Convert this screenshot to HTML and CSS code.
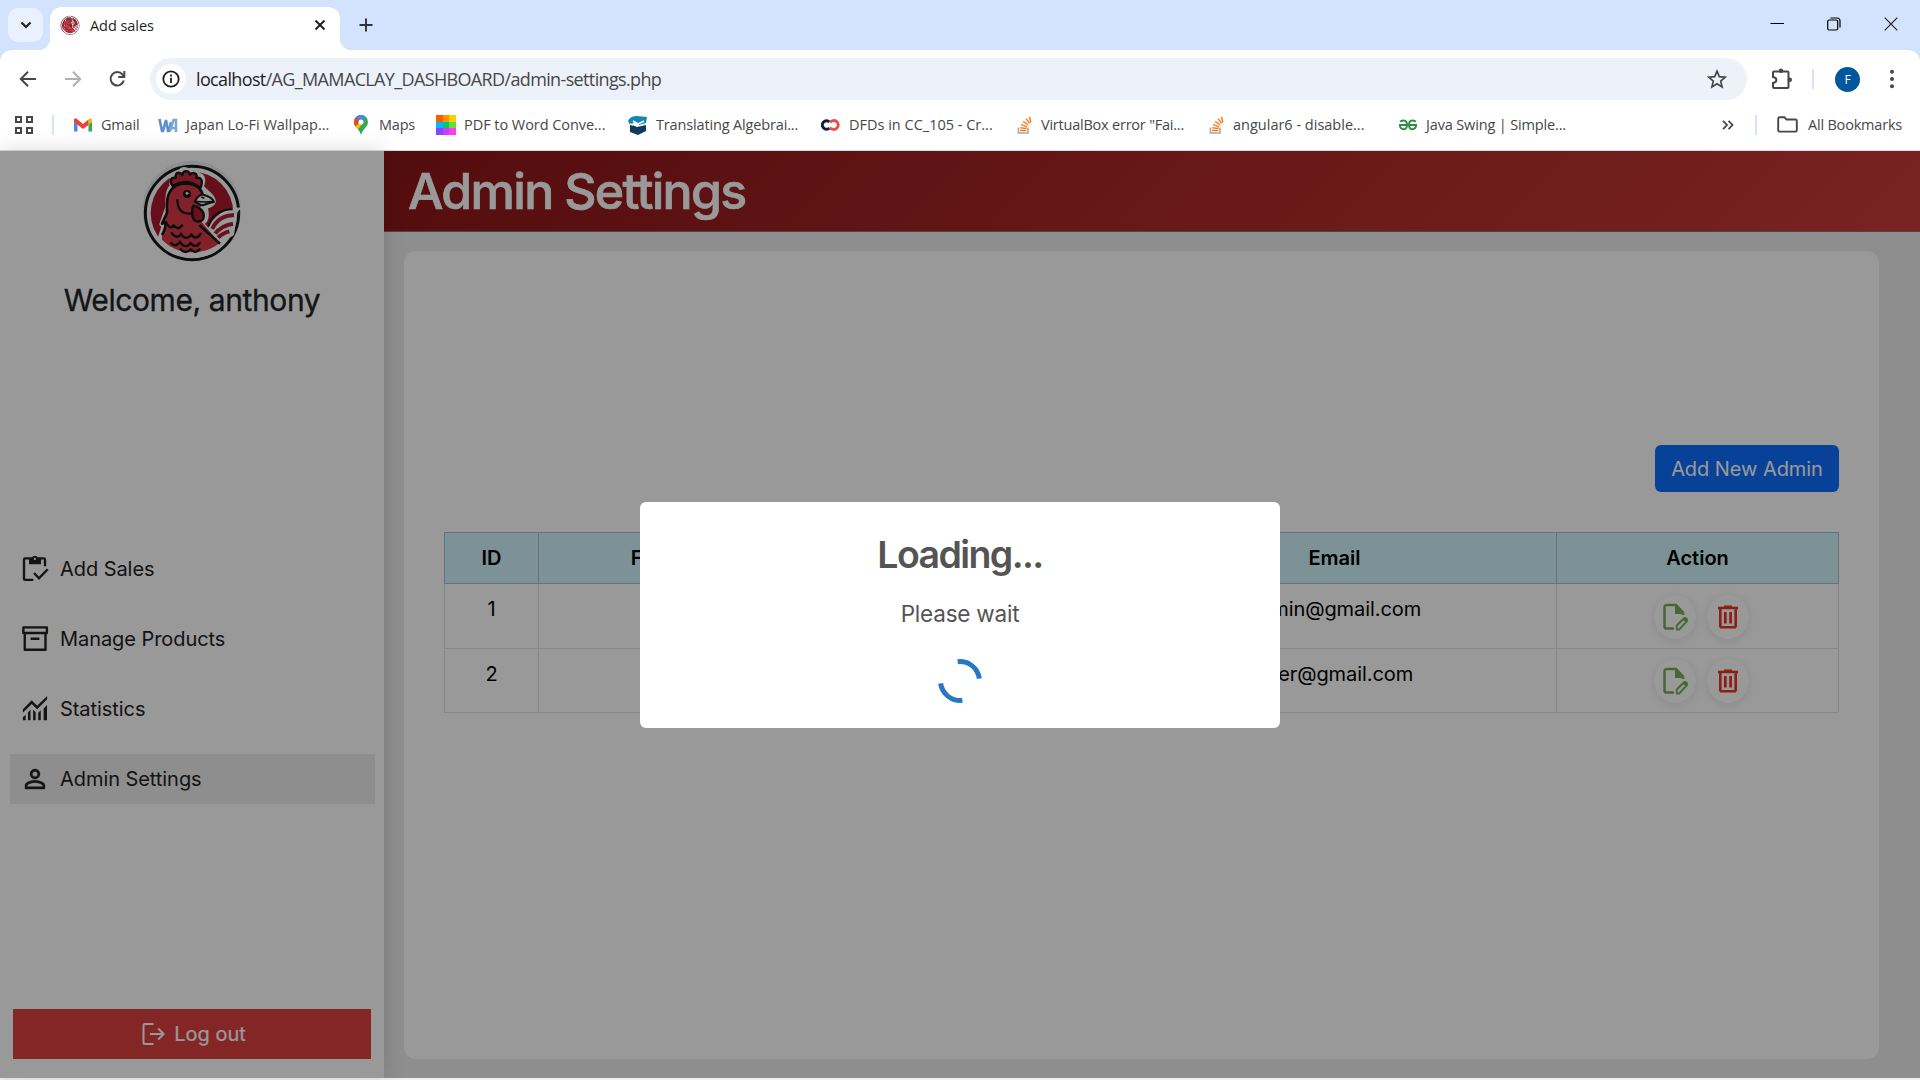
FILE: index.html
```html
<!DOCTYPE html>
<html lang="en">
<head>
<meta charset="utf-8">
<title>Add sales</title>
<link rel="stylesheet" href="styles.css">
</head>
<body>
<svg class="defs" width="0" height="0">
  <symbol id="rooster" viewBox="36 15 300 306">
    <circle cx="185" cy="165" r="148" fill="#eceeee"/>
    <circle cx="186" cy="174" r="140" fill="#fff" stroke="#151718" stroke-width="9"/>
    <circle cx="186" cy="174" r="124" fill="#ab1a2c"/>
    <path d="M336 157C285 158 248 185 234 222L272 266 312 240 322 172Z" fill="#fff"/>
    <path d="M308 163c-38 0-64 20-72 50" fill="none" stroke="#151718" stroke-width="6"/>
    <path d="M312 180c-36 2-56 20-65 42M309 206c-26 4-42 14-53 30M298 229c-14 4-26 10-34 19" fill="none" stroke="#a92034" stroke-width="12"/>
    <path d="M118 92c-2-22 8-44 26-44 6-16 28-14 34-6 16-8 28 2 32 12 16 4 20 22 12 40 14 14 34 26 36 46-6 16-18 18-24 20 6 24 0 42-10 46l56 58c-20 36-64 44-90 45-40 0-80-20-108-58l12-36c-4-2-6-4-6-8l18-52c0-30 0-50 12-63Z" fill="#fff"/>
    <path d="M96 238c6-8 8-18 12-36l-11 3 13-30 1-33c0-30 14-54 50-60 30-3 53 10 57 40l-12 68 62 74c-18 16-46 28-82 28-34 0-64-12-90-38Z" fill="#db3846"/>
    <path d="M96 240c6-8 10-22 12-38l-12 4 15-32v-30c1-34 20-58 52-59 32 0 52 14 55 36M208 210l62 56" fill="none" stroke="#151718" stroke-width="8" stroke-linejoin="round"/>
    <path d="M128 93c-12-16-4-28 9-24-2-18 12-20 20-9 2-16 20-15 23-1 10-11 24-2 19 10 14-4 22 8 12 30-30-24-54-23-83-6Z" fill="#c9293b" stroke="#151718" stroke-width="7" stroke-linejoin="round"/>
    <path d="M190 152c20 4 34 18 31 34-1 16-28 20-33 0-2-14-4-22 2-34Z" fill="#b51d30" stroke="#151718" stroke-width="7"/>
    <path d="M194 139c8-12 16-22 26-20 16 4 28 10 32 22-16 2-26 8-34 10-8-1-16-6-24-12Z" fill="#fff" stroke="#151718" stroke-width="6" stroke-linejoin="round"/>
    <path d="M196 139l24 2 30-1M214 126l9 4" fill="none" stroke="#151718" stroke-width="5"/>
    <circle cx="171" cy="117" r="12" fill="#151718"/><circle cx="171" cy="115" r="4.500" fill="#dde8ea"/>
    <path d="M142 133c0 34 18 46 42 42" fill="none" stroke="#151718" stroke-width="7"/>
    <path d="M110 205c8 14 14 16 20 6 8 10 18 14 28-2M124 232c8 16 22 18 29 4 8 16 24 16 31 2 8 14 22 12 29-4M122 262c8 12 20 12 28-2 8 16 22 18 32 4 8 12 22 12 28-2M150 280c8 12 20 16 32 3 10 12 22 8 28-2" fill="none" stroke="#151718" stroke-width="7" stroke-linejoin="round"/>
  </symbol>
  <symbol id="so" viewBox="0 0 20 22">
    <path d="M3 14v7h12v-7" fill="none" stroke="#a5a9ac" stroke-width="2"/>
    <path d="M5 18h8M5.300 14.500l8 1M6.300 10.500l7.600 2.600M9 6.500l6.300 4.500M12.500 3l4.500 6M17 1l1.500 7" fill="none" stroke="#f48024" stroke-width="1.900"/>
  </symbol>
  <symbol id="edit" viewBox="0 0 26 28">
    <path d="M12 25.500H4.500a2 2 0 0 1-2-2V4a2 2 0 0 1 2-2H14l7 7.500V12" fill="none" stroke="#7aad52" stroke-width="2.500"/>
    <path d="M13 2l8.500 9H13Z" fill="#7aad52"/>
    <path d="M14.800 26.500v-4l7-7a1.500 1.500 0 0 1 2.200 0l.7.700a1.500 1.500 0 0 1 0 2.200l-7.500 8.100Z" fill="none" stroke="#7aad52" stroke-width="1.900"/>
    <path d="M20.500 16l2-1.700 3 3-2 2Z" fill="#7aad52"/>
  </symbol>
  <symbol id="trash" viewBox="0 0 20 24">
    <path d="M0 1.800h6V.500h8v1.300h6v2.400H0Z" fill="#ea3323"/>
    <path d="M2.300 4v16.800a1.500 1.500 0 0 0 1.500 1.500h12.400a1.500 1.500 0 0 0 1.500-1.500V4" fill="none" stroke="#ea3323" stroke-width="2.600"/>
    <path d="M7.300 7v11.500M12.600 7v11.500" stroke="#ea3323" stroke-width="2.700"/>
  </symbol>
</svg>

<header class="browser">
  <div class="tabstrip">
    <div class="tab-search"><svg width="12" height="8" viewBox="0 0 12 8"><path d="M1.500 1.500L6 6l4.500-4.500" fill="none" stroke="#1f1f1f" stroke-width="2.200"/></svg></div>
    <div class="tab">
      <svg class="favicon" width="20" height="20"><use href="#rooster"/></svg>
      <span class="tab-title">Add sales</span>
      <svg width="12" height="12" viewBox="0 0 12 12"><path d="M1.500 1.500l9 9M10.500 1.500l-9 9" stroke="#1f1f1f" stroke-width="1.900"/></svg>
    </div>
    <svg class="new-tab" width="14" height="14" viewBox="0 0 14 14"><path d="M7 .5v13M.5 7h13" stroke="#333" stroke-width="1.900"/></svg>
    <div class="window-controls">
      <svg width="14" height="14" viewBox="0 0 14 14"><path d="M.5 6.500h13.500" stroke="#000" stroke-width="1"/></svg>
      <svg width="14" height="14" viewBox="0 0 14 14"><rect x=".7" y="3" width="10" height="10" rx="1.500" fill="none" stroke="#000" stroke-width="1.200"/><path d="M3.500 1h6.500a3 3 0 0 1 3 3v6.500" fill="none" stroke="#000" stroke-width="1.200"/></svg>
      <svg width="14" height="14" viewBox="0 0 14 14"><path d="M.7.700l12.600 12.600M13.300.700L.7 13.300" stroke="#222" stroke-width="1.200"/></svg>
    </div>
  </div>
  <div class="toolbar">
    <div class="nav-buttons">
      <svg width="18" height="18" viewBox="0 0 18 18"><path d="M17 9H2.500M9 1.800L1.800 9 9 16.200" fill="none" stroke="#474747" stroke-width="2"/></svg>
      <svg width="18" height="18" viewBox="0 0 18 18"><path d="M1 9h14.500M9 1.800L16.200 9 9 16.200" fill="none" stroke="#b0b0b0" stroke-width="2"/></svg>
      <svg width="18" height="18" viewBox="0 0 18 18"><path d="M14.800 10.500a6.700 6.700 0 1 1-1.300-6L15 6" fill="none" stroke="#474747" stroke-width="2"/><path d="M15.300 1v6H9.300" fill="none" stroke="#474747" stroke-width="2"/></svg>
    </div>
    <div class="omnibox">
      <span class="site-info"><svg width="18" height="18" viewBox="0 0 18 18"><circle cx="9" cy="9" r="7.700" fill="none" stroke="#1f1f1f" stroke-width="1.800"/><path d="M9 7.800v5.200M9 4.600v2" stroke="#1f1f1f" stroke-width="1.800"/></svg></span>
      <span class="url"><b>localhost</b>/AG_MAMACLAY_DASHBOARD/admin-settings.php</span>
      <svg width="20" height="20" viewBox="0 0 20 20"><path d="M10 2.200l2.300 5.500 6 .5-4.600 3.900 1.400 5.800L10 14.800l-5.100 3.100 1.400-5.800L1.700 8.200l6-.5Z" fill="none" stroke="#474747" stroke-width="1.700"/></svg>
    </div>
    <svg class="puzzle" width="22" height="22" viewBox="0 0 22 22"><path d="M3 3.500H16.500a1 1 0 0 1 1 1V19a1 1 0 0 1-1 1H3a1 1 0 0 1-1-1V15c4.500-.5 4.500-5.500 0-6V4.500a1 1 0 0 1 1-1Z" fill="none" stroke="#474747" stroke-width="2"/><circle cx="10" cy="2.700" r="2.200" fill="#474747"/><circle cx="18.800" cy="11.800" r="2.200" fill="#474747"/></svg>
    <i class="divider"></i>
    <span class="avatar">F</span>
    <svg class="dots" width="6" height="20" viewBox="0 0 6 20"><g fill="#474747"><circle cx="3" cy="2.800" r="2"/><circle cx="3" cy="10" r="2"/><circle cx="3" cy="17.200" r="2"/></g></svg>
  </div>
  <nav class="bookmarks">
    <svg class="apps" width="18" height="18" viewBox="0 0 18 18"><g fill="none" stroke="#474747" stroke-width="2"><path d="M1 1h5v5H1ZM12 1h5v5h-5ZM1 12h5v5H1ZM12 12h5v5h-5Z"/></g></svg>
    <i class="divider"></i>
    <span class="bm gmail"><svg width="20" height="20" viewBox="0 0 20 20"><path d="M1 4v12.500h3.500V8Z" fill="#4285f4"/><path d="M19 4v12.500h-3.500V8Z" fill="#34a853"/><path d="M15.500 4.500l2-1.200Q19 3 19 5v2l-3.500 3Z" fill="#fbbc04"/><path d="M1 5Q1 3 3 3.300L10 9l5.500-4.500V10L10 14 1 7Z" fill="#ea4335"/></svg>Gmail</span>
    <span class="bm japan"><svg width="20" height="20" viewBox="0 0 20 20"><path d="M1.500 4l2.500 12h1L8 5l2 11h1l2-9" fill="none" stroke="#5d8fcd" stroke-width="2.600"/><path d="M12 16.500l3.500-11.500h2.500v12M14 13h4" fill="none" stroke="#7ba6dc" stroke-width="2.500"/></svg>Japan Lo-Fi Wallpap...</span>
    <span class="bm maps"><svg width="16" height="20" viewBox="0 0 16 20"><path d="M1 7a7 7 0 0 1 14 0c0 5-5 6-7 13C6 13 1 12 1 7Z" fill="#34a853"/><path d="M1 7a7 7 0 0 1 7-7L5 8l-2.500 3.500Q1 10 1 7Z" fill="#ea4335"/><path d="M3 2.500A7 7 0 0 1 12.500 1.600L8 7Z" fill="#4285f4"/><path d="M2.500 11.500L8 6l2 2-5 6.500Z" fill="#fbbc04"/><circle cx="8" cy="7" r="2.500" fill="#fff"/></svg>Maps</span>
    <span class="bm pdf"><svg width="20" height="20" viewBox="0 0 20 20"><path d="M0 0h7v7H0Z" fill="#ff5a00"/><path d="M7 0h6v7H7Z" fill="#ff9500"/><path d="M13 0h7v7h-7Z" fill="#ffd000"/><path d="M0 7h7v6H0Z" fill="#00b8ff"/><path d="M7 7h6v6H7Z" fill="#00c878"/><path d="M13 7h7v6h-7Z" fill="#5fe03e"/><path d="M0 13h7v7H0Z" fill="#8a43ff"/><path d="M7 13h6v7H7Z" fill="#c93dff"/><path d="M13 13h7v7h-7Z" fill="#ff3df0"/></svg>PDF to Word Conve...</span>
    <span class="bm algebra"><svg width="20" height="20" viewBox="0 0 20 20"><path d="M0 6Q2 1 9 1l10 1-1 6-7 2-4-3-5 3Z" fill="#1586b4"/><path d="M2 9l7 3 9-2v6l-8 4-8-3Z" fill="#12395f"/><path d="M5 6l5 3 6-3M2 9l3 1" fill="none" stroke="#fff" stroke-width="1.600"/></svg>Translating Algebrai...</span>
    <span class="bm dfd"><svg width="20" height="14" viewBox="0 0 20 14"><path d="M9.500 4A4.200 4.200 0 1 0 9.500 10" fill="none" stroke="#101c3a" stroke-width="3"/><path d="M10 9.500A4.500 4.500 0 1 0 10 4.500" fill="none" stroke="#ef4b4b" stroke-width="2.800"/></svg>DFDs in CC_105 - Cr...</span>
    <span class="bm vbox"><svg width="16" height="18"><use href="#so"/></svg>VirtualBox error "Fai...</span>
    <span class="bm angular"><svg width="16" height="18"><use href="#so"/></svg>angular6 - disable...</span>
    <span class="bm java"><svg width="18" height="12" viewBox="0 0 18 12"><path d="M0 6h18M1 2.500Q8-.5 8 6c0 5.500-7 5.500-7 .5M17 2.500Q10-.5 10 6c0 5.500 7 5.500 7 .5" fill="none" stroke="#2f8d46" stroke-width="1.900"/></svg>Java Swing | Simple...</span>
    <svg class="more" width="12" height="10" viewBox="0 0 12 10"><path d="M1 .8L5 5 1 9.200M6.500.800L10.500 5l-4 4.200" fill="none" stroke="#474747" stroke-width="1.800"/></svg>
    <i class="divider"></i>
    <span class="bm all"><svg width="21" height="17" viewBox="0 0 21 17"><path d="M2.500 1.200h5l2 2.300h9a1.300 1.300 0 0 1 1.300 1.300v9.500a1.300 1.300 0 0 1-1.300 1.300h-16a1.300 1.300 0 0 1-1.300-1.300V2.500a1.300 1.300 0 0 1 1.300-1.300Z" fill="none" stroke="#474747" stroke-width="1.900"/></svg>All Bookmarks</span>
  </nav>
</header>

<div class="page">
  <aside class="sidebar">
    <svg class="logo" width="100" height="102"><use href="#rooster"/></svg>
    <h3 class="welcome">Welcome, anthony</h3>
    <ul class="menu">
      <li><svg width="30" height="30" viewBox="0 0 24 24"><path d="M10.700 20.700H4.200a1 1 0 0 1-1-1V4.500a1 1 0 0 1 1-1H19a1 1 0 0 1 1 1v5.300" fill="none" stroke="#222" stroke-width="1.900"/><path d="M7.200 3.200h2.300a2.500 2.500 0 0 1 4.800 0h2.500v5H7.200Z" fill="#222"/><circle cx="11.900" cy="3.900" r=".9" fill="#fff"/><path d="M11.200 15.200l4 4.200 7-7.200" fill="none" stroke="#222" stroke-width="1.900"/></svg>Add Sales</li>
      <li><svg width="30" height="30" viewBox="0 0 24 24"><path d="M2.700 2.700h18.800v4.500H2.700ZM3.800 7.200h16.600v13.400H3.800ZM8.500 11.800h7" fill="none" stroke="#222" stroke-width="1.900" stroke-linejoin="round"/></svg>Manage Products</li>
      <li><svg width="30" height="30" viewBox="0 0 24 24"><path d="M2.300 12.200V15L9.400 7.900l4.300 4.200 8-8V1.500l-8 7.900L9.400 5Z" fill="#222"/><path d="M2.300 18.500l2.200-2V21H2.300ZM6.400 14.500l2-2V21H6.400ZM10.500 12.500l2 2V21h-2ZM14.600 15l2-2V21h-2ZM18.900 11.500l2.700-2.700V21h-2.700Z" fill="#222"/></svg>Statistics</li>
      <li class="active"><svg width="30" height="30" viewBox="0 0 24 24"><path d="M12 5.900a2.100 2.100 0 1 1 0 4.200 2.100 2.100 0 0 1 0-4.200m0 9c2.970 0 6.100 1.460 6.100 2.100v1.100H5.900V17c0-.64 3.130-2.100 6.100-2.100M12 4C9.790 4 8 5.790 8 8s1.790 4 4 4 4-1.790 4-4-1.790-4-4-4zm0 9c-2.670 0-8 1.340-8 4v3h16v-3c0-2.660-5.330-4-8-4z" fill="#222" stroke="#222" stroke-width=".3"/></svg>Admin Settings</li>
    </ul>
    <div class="logout"><svg width="24" height="24" viewBox="0 0 24 24"><path d="M12.500 2H4a1.500 1.500 0 0 0-1.500 1.500v17A1.500 1.500 0 0 0 4 22h8.500M9 12h13.500M17.200 6.500l5.500 5.500-5.500 5.500" fill="none" stroke="#fff" stroke-width="2"/></svg>Log out</div>
  </aside>
  <main class="main">
    <div class="titlebar"><h1>Admin Settings</h1></div>
    <section class="panel">
      <button class="add">Add New Admin</button>
      <table class="admins">
        <colgroup><col class="c-id"><col class="c-name"><col class="c-user"><col class="c-mail"><col class="c-act"></colgroup>
        <thead><tr><th>ID</th><th>Full Name</th><th></th><th>Email</th><th>Action</th></tr></thead>
        <tbody>
          <tr><td>1</td><td></td><td></td><td>admin@gmail.com</td><td><div class="actions"><span><svg width="26" height="28"><use href="#edit"/></svg></span><span><svg width="20" height="24"><use href="#trash"/></svg></span></div></td></tr>
          <tr><td>2</td><td></td><td></td><td>user@gmail.com</td><td><div class="actions"><span><svg width="26" height="28"><use href="#edit"/></svg></span><span><svg width="20" height="24"><use href="#trash"/></svg></span></div></td></tr>
        </tbody>
      </table>
    </section>
  </main>
  <div class="backdrop">
    <div class="dialog">
      <h2>Loading...</h2>
      <p>Please wait</p>
      <div class="loader"></div>
    </div>
  </div>
</div>
</body>
</html>
```
FILE: styles.css
```css
* { box-sizing: border-box; }
body {
  margin: 0;
  width: 1920px;
  height: 1080px;
  overflow: hidden;
  background: #f1f0f0;
  font-family: Inter, "Liberation Sans", sans-serif;
}
svg { display: block; flex: none; }
.defs { position: absolute; }

/* browser window */
.browser {
  height: 151px;
  background: #d3e3fd;
  border-bottom: 1px solid #d5dedb;
  font-family: "Open Sans", "Noto Sans", sans-serif;
  color: #474747;
}
.tabstrip { display: flex; height: 50px; padding-left: 8px; }
.tab-search {
  display: flex; align-items: center; justify-content: center;
  width: 35px; height: 34px; margin-top: 8px;
  border-radius: 10px; background: #e9f1fe;
}
.tab {
  position: relative;
  display: flex; align-items: center;
  width: 290px; height: 43px; margin: 7px 0 0 7px; padding: 0 14px 8px 10px;
  border-radius: 12px 12px 0 0; background: #fff;
}
.tab::before, .tab::after {
  content: ""; position: absolute; bottom: 0; width: 12px; height: 12px;
}
.tab::before { left: -12px; background: radial-gradient(circle at 0 0, transparent 12px, #fff 12.5px); }
.tab::after { right: -12px; background: radial-gradient(circle at 100% 0, transparent 12px, #fff 12.5px); }
.tab-title { flex: 1; margin-left: 10px; padding-top: 2px; font-size: 14.5px; letter-spacing: -.05px; color: #1f1f1f; }
.new-tab { margin: 18px 0 0 19px; }
.window-controls { display: flex; gap: 43px; margin: 17px 22px 0 auto; }
.toolbar {
  display: flex; align-items: center;
  height: 58px; padding-left: 19px;
  border-radius: 12px 12px 0 0; background: #fff;
}
.nav-buttons { display: flex; gap: 27px; width: 131px; }
.omnibox {
  display: flex; align-items: center;
  width: 1597px; height: 42px; padding: 0 20px 0 6px;
  border-radius: 21px; background: #ecf1fa;
}
.site-info {
  display: flex; align-items: center; justify-content: center;
  width: 30px; height: 30px; border-radius: 50%; background: #fff;
}
.url { flex: 1; margin-left: 10px; font-size: 18px; letter-spacing: -.64px; }
.url b { font-weight: 400; color: #1f1f1f; }
.puzzle { margin-left: 24px; }
.divider { width: 2px; height: 20px; background: #d3e3fd; }
.toolbar .divider { margin-left: 19px; }
.avatar {
  width: 25px; height: 25px; margin-left: 21px;
  border-radius: 50%; background: #00579e; color: #fff;
  font-size: 12px; line-height: 25px; text-align: center;
}
.dots { margin-left: 29px; }
.bookmarks {
  display: flex; align-items: center;
  height: 42px; padding: 0 0 9px 15px; background: #fff;
  font-size: 14.5px; letter-spacing: -.05px; white-space: nowrap;
}
.bookmarks .divider { margin-left: 19px; }
.bm { display: flex; align-items: center; gap: 8px; }
.gmail { margin-left: 19px; width: 85px; letter-spacing: -.2px; }
.japan { width: 195px; letter-spacing: 0; }
.maps { width: 83px; gap: 10px; letter-spacing: -.2px; }
.pdf { width: 192px; }
.algebra { width: 192px; letter-spacing: -.15px; }
.dfd { width: 196px; gap: 9px; letter-spacing: 0; }
.vbox { width: 192px; gap: 9px; letter-spacing: -.22px; }
.angular { width: 191px; gap: 9px; letter-spacing: 0; }
.java { gap: 9px; width: 323px; letter-spacing: -.15px; }
.bookmarks .more + .divider { margin-left: 21px; }
.all { margin-left: 20px; gap: 10px; letter-spacing: -.2px; }

/* application */
.page { position: relative; display: flex; height: 927px; background: #ededed; }
.sidebar {
  z-index: 1;
  display: flex; flex: none; flex-direction: column; align-items: center;
  width: 384px; padding: 9px 0 19px;
  background: #fff; box-shadow: 0 0 20px rgba(0, 0, 0, .15);
}
.welcome { margin: 19px 0 0; font-size: 30px; font-weight: 400; line-height: 38px; color: #212529; letter-spacing: -.4px; -webkit-text-stroke: .3px #212529; }
.menu {
  display: flex; flex-direction: column; gap: 20px;
  width: 365px; margin: 225px 0 0 1px; padding: 0; list-style: none;
}
.menu li {
  display: flex; align-items: center; gap: 10px;
  height: 50px; padding-left: 10px; font-size: 20px; letter-spacing: -.06px; color: #222;
}
.menu .active { background: #ededed; }
.logout {
  display: flex; align-items: center; justify-content: center; gap: 9px;
  width: 358px; height: 50px; margin-top: auto; padding-left: 3px;
  background: #dc4040; color: #fff; font-size: 20px;
  -webkit-text-stroke: .2px #fff;
}
.main { flex: 1; min-width: 0; display: flex; flex-direction: column; }
.titlebar {
  height: 81px; padding-left: 24px;
  border-bottom: 1px solid #777;
  background: linear-gradient(135deg, #8b1516, #cb3a3a);
}
.titlebar h1 {
  margin: 0; font-size: 50px; font-weight: 500; line-height: 80px;
  color: #fff; letter-spacing: -1.7px; -webkit-text-stroke: .7px #fff;
}
.panel {
  flex: 1;
  display: flex; flex-direction: column;
  margin: 19px 41px 19px 20px; padding: 194px 40px 0;
  border-radius: 12px; background: #fff;
}
.add {
  align-self: flex-end;
  width: 184px; height: 47px; padding: 0;
  border: 0; border-radius: 6px; background: #0d6efd; color: #fff;
  font: 400 20px Inter, "Liberation Sans", sans-serif; letter-spacing: -.06px;
}
.admins {
  width: 1395px; margin-top: 40px;
  table-layout: fixed; border-collapse: collapse;
  font-size: 20px; line-height: 30px; text-align: center; color: #000;
}
.c-id { width: 94px; } .c-name { width: 280px; } .c-user { width: 294px; }
.c-mail { width: 444px; } .c-act { width: 282px; }
.admins th { height: 51px; padding: 0; border: 1px solid #a6c3ca; background: #cff4fc; font-weight: 600; }
.admins td { height: 65px; padding: 10px 0 0; border: 1px solid #dee2e6; vertical-align: top; letter-spacing: -.08px; }
.admins tr + tr td { height: 64px; }
.actions { display: flex; justify-content: center; gap: 11px; padding-left: 7px; }
.admins tr:first-child .actions { margin-top: 1px; }
.actions span {
  display: flex; align-items: center; justify-content: center;
  width: 42px; height: 44px; border-radius: 50%;
  background: #fff; box-shadow: 0 2px 10px rgba(0, 0, 0, .1);
}

/* loading dialog */
.backdrop {
  position: absolute; inset: 0; z-index: 2;
  display: flex; align-items: center; justify-content: center;
  background: rgba(0, 0, 0, .4);
}
.dialog {
  display: flex; flex-direction: column; align-items: center;
  width: 640px; height: 226px;
  border-radius: 6px; background: #fff; color: #545454;
}
.dialog h2 { margin: 30px 0 0; font-size: 37.5px; font-weight: 600; line-height: 46px; letter-spacing: -1.6px; }
.dialog p { margin: 20px 0 0; font-size: 22.5px; line-height: 32px; letter-spacing: -.22px; }
.loader {
  width: 44px; height: 44px; margin-top: 29px;
  border: 5px solid; border-color: #2778c4 transparent;
  border-radius: 50%; transform: rotate(38deg);
}
```
